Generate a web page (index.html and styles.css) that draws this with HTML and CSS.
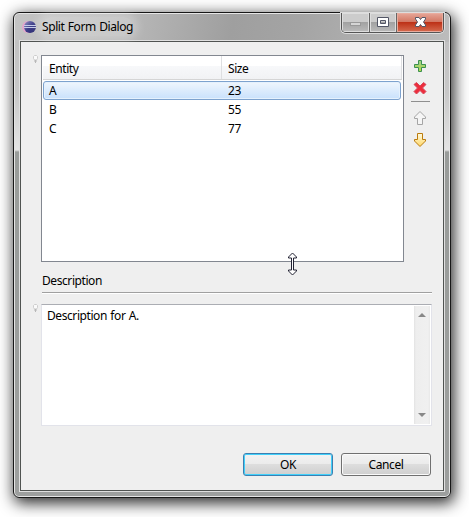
FILE: index.html
```html
<!DOCTYPE html>
<html lang="en">
<head>
<meta charset="utf-8">
<title>Split Form Dialog</title>
<link rel="stylesheet" href="styles.css">
</head>
<body>
<div class="window">
  <header class="titlebar">
    <svg class="logo" width="14" height="14" viewBox="0 0 14 14">
      <defs><linearGradient id="ball" x1="0" y1="0" x2="1" y2="1"><stop offset="0" stop-color="#9a9acb"/><stop offset=".5" stop-color="#3c3c88"/><stop offset="1" stop-color="#28286c"/></linearGradient></defs>
      <circle cx="6" cy="7" r="6" fill="#e3a6cc"/>
      <circle cx="8" cy="7" r="6" fill="url(#ball)"/>
      <path d="M2 5.500h12M2 7.500h12" stroke="#c5cbe8"/>
    </svg>
    <h1 class="title">Split Form Dialog</h1>
    <div class="controls">
      <span class="control minimize"><svg width="27" height="18" viewBox="0 0 27 18"><rect x="8.500" y="9.500" width="10" height="3" fill="#d5d5d5" stroke="#999"/></svg></span>
      <span class="control maximize"><svg width="26" height="18" viewBox="0 0 26 18"><path d="M7.500 4.500h11v9h-11zM10.500 7.500v3h5v-3z" fill="#fff" fill-rule="evenodd" stroke="#535666"/></svg></span>
      <span class="control close"><svg width="46" height="18" viewBox="0 0 46 18"><path d="M18.500 4.500h3.500l1.500 2 1.500-2h3.500v1.500l-2 3 2 3v1.500h-3.500l-1.500-2-1.500 2h-3.500v-1.500l2-3-2-3z" fill="#fff" stroke="#535666"/></svg></span>
    </div>
  </header>
  <main class="client">
    <section class="master">
      <svg class="bulb" width="7" height="10" viewBox="0 0 7 10"><path d="M1.500 5L.5 3.500V1.500L1.500.5h2l1 1v2L3.500 5z" fill="#fafafa" stroke="#cdcdcd"/><path d="M1.500 5.500h2M1.500 6.500h2M2 7.500h1" stroke="#b8b8b8"/></svg>
      <div class="table">
        <div class="thead"><span class="th entity">Entity</span><span class="th size">Size</span></div>
        <div class="row selected"><span class="entity">A</span><span class="size">23</span></div>
        <div class="row"><span class="entity">B</span><span class="size">55</span></div>
        <div class="row"><span class="entity">C</span><span class="size">77</span></div>
      </div>
      <div class="toolbar">
        <svg width="19" height="90" viewBox="0 0 19 90">
          <defs>
            <linearGradient id="green" x2="0" y2="1"><stop offset="0" stop-color="#9bd08b"/><stop offset="1" stop-color="#b7d84b"/></linearGradient>
            <linearGradient id="gold" x2="0" y2="1"><stop offset="0" stop-color="#fffbe0"/><stop offset="1" stop-color="#ffd766"/></linearGradient>
          </defs>
          <path d="M7.500.5h3v4h4v3h-4v4h-3v-4h-4v-3h4z" fill="url(#green)" stroke="#3c9150"/>
          <path d="M5.500 22.500l3.500 3.500 3.500-3.500 2.500 2-3.500 3.500 3.500 3.500-2.500 2.500-3.500-3.500-3.500 3.500-2.500-2.500 3.500-3.500-3.500-3.500z" fill="#ed2d3c" stroke="#d8485a"/>
          <path d="M0 41.500h19" stroke="#8f8f8f"/>
          <path d="M9 51.500l5.500 5.500v1.500h-3v6h-5v-6h-3v-1.500z" fill="#f5f5f5" stroke="#a5a5a5"/>
          <path d="M6.500 73.500h5v6h3v1.500L9 86.500 3.500 81v-1.500h3z" fill="url(#gold)" stroke="#bb7b0d"/>
        </svg>
      </div>
    </section>
    <h2 class="heading">Description</h2>
    <section class="detail">
      <svg class="bulb" width="7" height="10" viewBox="0 0 7 10"><path d="M1.500 5L.5 3.500V1.500L1.500.5h2l1 1v2L3.500 5z" fill="#fafafa" stroke="#cdcdcd"/><path d="M1.500 5.500h2M1.500 6.500h2M2 7.500h1" stroke="#b8b8b8"/></svg>
      <div class="textbox">
        <p class="text">Description for A.</p>
        <div class="scrollbar">
          <svg width="8" height="4" viewBox="0 0 8 4"><path d="M0 4l4-4 4 4z" fill="#888"/></svg>
          <svg width="8" height="4" viewBox="0 0 8 4"><path d="M0 0l4 4 4-4z" fill="#888"/></svg>
        </div>
      </div>
    </section>
    <footer class="buttons">
      <button class="button primary">OK</button>
      <button class="button">Cancel</button>
    </footer>
  </main>
  <svg class="cursor" width="9" height="24" viewBox="0 0 9 24"><path d="M4.500 1l4 4v1H5.500v12h3v1l-4 4-4-4v-1h3V6H.5V5z" fill="#fff" stroke="#222233"/></svg>
</div>
</body>
</html>
```
FILE: styles.css
```css
* { box-sizing: border-box; }
body {
  margin: 0;
  height: 517px;
  padding: 12px 0 0 13px;
  overflow: hidden;
  background: #fff;
  color: #000;
  font: 12px/19px "Noto Sans", "Open Sans", sans-serif;
  letter-spacing: -0.42px;
  word-spacing: 0.7px;
}
svg { display: block; }
h1, h2, p { margin: 0; font-size: inherit; font-weight: 400; }
.window {
  position: relative;
  width: 438px;
  height: 486px;
  padding: 0 6px 6px;
  border: 1px solid #171717;
  border-radius: 6px;
  background: linear-gradient(100deg, #c4c4c4 0, #b4b4b4 30%, #9f9f9f 50%, #a4a4a4 65%, #bcbcbc 100%) 0 0 / 100% 29px no-repeat,
    linear-gradient(#c2c2c2 29px, #c8c8c8 80px, #e4e4e4 137px, #999c9a 139px, #9d9f9e);
  box-shadow: inset 0 0 0 1px #e5e5e5, 2px 4px 15px 1px rgba(0, 0, 0, .85);
}
.titlebar { display: flex; height: 28px; align-items: flex-start; }
.logo { margin: 7px 0 0 2px; }
.title {
  height: 19px;
  margin: 4px 0 0 6px;
  border-radius: 9px;
  background: rgba(255, 255, 255, .25);
  box-shadow: 0 0 8px 5px rgba(255, 255, 255, .25);
}
.controls {
  display: flex;
  width: 103px;
  height: 20px;
  margin-left: auto;
  border: 1px solid #555;
  border-top: 0;
  border-radius: 0 0 5px 5px;
  overflow: hidden;
  box-shadow: 0 0 0 1px #ddd;
}
.control { border-right: 1px solid #666; background: linear-gradient(#ccc 45%, #a2a2a2 50%, #bbb); box-shadow: inset 0 0 0 1px #ddd; }
.minimize { width: 28px; }
.maximize { width: 27px; }
.close { width: 46px; border: 0; background: linear-gradient(#e7a799, #d37965 45%, #bd3218 50%, #d66c50); box-shadow: inset 0 0 0 1px #e8ac9e; }
.client {
  height: 450px;
  padding: 13px 11px 0 12px;
  border: 1px solid #505351;
  outline: 1px solid #e0e0e0;
  background: #efefef;
}
.master, .detail { display: flex; }
.bulb { flex: none; margin-right: 1px; }
.table {
  width: 363px;
  height: 207px;
  border: 1px solid #828790;
  background: #fff;
}
.thead {
  display: flex;
  height: 24px;
  margin: 0 1px 1px;
  border-bottom: 1px solid #d5d5d5;
  background: linear-gradient(#fff 43%, #f7f8fa 45%, #f1f2f4);
  line-height: 26px;
}
.th { border-right: 1px solid #dedfe1; }
.thead .entity { width: 179px; padding-left: 6px; }
.thead .size { width: 180px; padding-left: 6px; }
.row { display: flex; width: 358px; height: 19px; margin-left: 1px; }
.row .entity { width: 179px; padding-left: 6px; }
.row .size { padding-left: 6px; }
.selected {
  border: 1px solid #7da2ce;
  border-radius: 3px;
  background: linear-gradient(#eff6fd, #c9e1fc);
  box-shadow: inset 0 0 0 1px #e5f1fd;
  line-height: 17px;
}
.selected .entity { width: 178px; padding-left: 5px; }
.toolbar { margin: 5px 0 0 7px; }
.heading {
  height: 21px;
  margin: 10px 0 0 9px;
  border-bottom: 1px solid #a0a0a0;
  box-shadow: 0 1px #fff;
  line-height: 17px;
}
.detail { margin-top: 11px; }
.textbox {
  display: flex;
  justify-content: space-between;
  width: 391px;
  height: 122px;
  padding: 1px;
  border: 1px solid #e2e3ea;
  border-top-color: #abadb3;
  background: #fff;
}
.text { padding-left: 4px; }
.scrollbar {
  display: flex;
  flex-direction: column;
  justify-content: space-between;
  align-items: center;
  width: 16px;
  padding: 7px 0;
  background: linear-gradient(90deg, #e3e3e3, #eee 2px, #f0f0f0 14px, #e8e8e8);
}
.buttons { display: flex; justify-content: flex-end; gap: 8px; margin: 27px 1px 0 0; }
.button {
  width: 90px;
  height: 23px;
  padding: 0;
  border: 1px solid #707070;
  border-radius: 3px;
  background: linear-gradient(#f2f2f2, #ebebeb 48%, #ddd 50%, #cfcfcf);
  box-shadow: inset 0 0 0 1px #fafafa;
  font: inherit;
  letter-spacing: inherit;
  line-height: 21px;
}
.primary { border-color: #3c7fb1; box-shadow: inset 0 0 0 1px #41d0fa; }
.cursor { position: absolute; left: 274px; top: 239px; }
```
